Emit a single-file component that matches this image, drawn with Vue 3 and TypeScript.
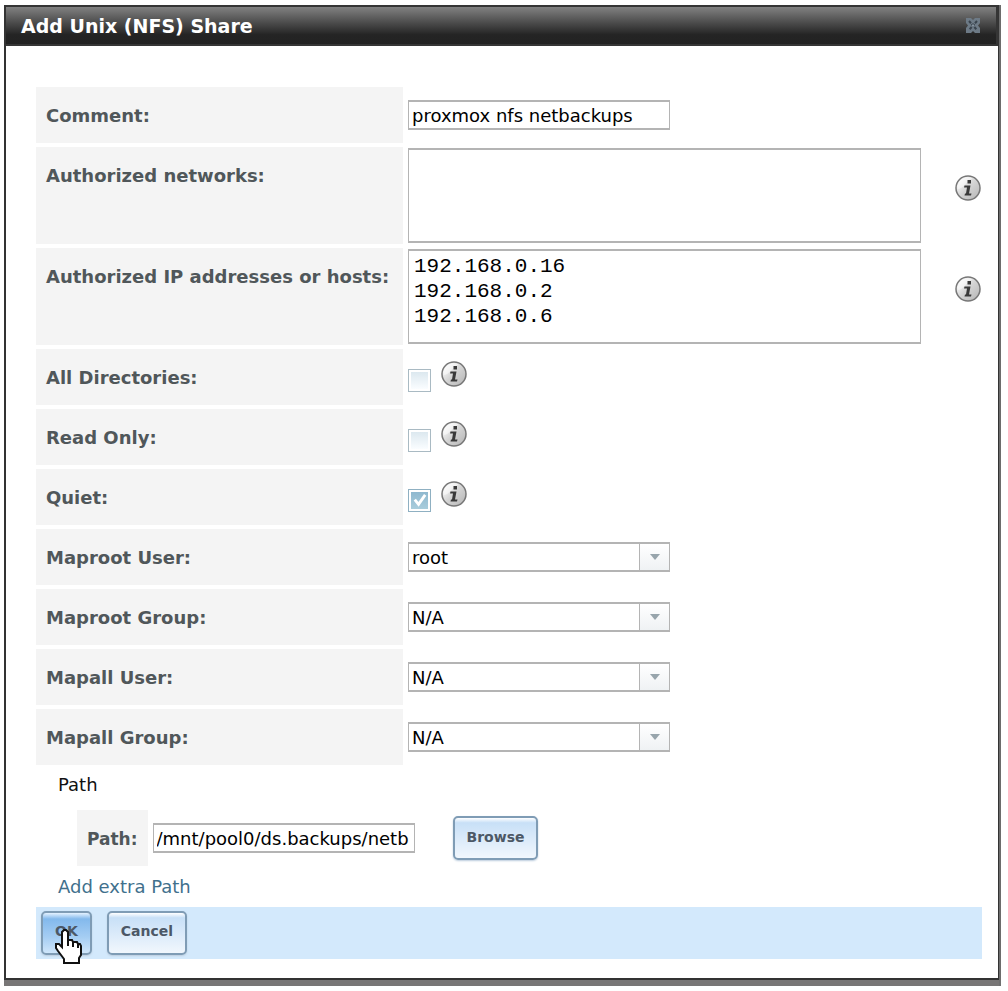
<script setup lang="ts">
import { reactive, ref } from 'vue'

interface Choice {
  id: string
  label: string
  value: string
  options: string[]
}

const comment = ref('proxmox nfs netbackups')
const areas = reactive([
  { id: 'networks', label: 'Authorized networks:', value: '' },
  { id: 'hosts', label: 'Authorized IP addresses or hosts:', value: '192.168.0.16\n192.168.0.2\n192.168.0.6' },
])
const flags = reactive([
  { id: 'alldirs', label: 'All Directories:', on: false },
  { id: 'readonly', label: 'Read Only:', on: false },
  { id: 'quiet', label: 'Quiet:', on: true },
])
const choices = reactive<Choice[]>([
  { id: 'maproot-user', label: 'Maproot User:', value: 'root', options: ['root', 'N/A'] },
  { id: 'maproot-group', label: 'Maproot Group:', value: 'N/A', options: ['N/A'] },
  { id: 'mapall-user', label: 'Mapall User:', value: 'N/A', options: ['N/A'] },
  { id: 'mapall-group', label: 'Mapall Group:', value: 'N/A', options: ['N/A'] },
])
const path = ref('/mnt/pool0/ds.backups/netb')
</script>

<template>
  <main class="dialog">
    <header class="titlebar">
      <h1>Add Unix (NFS) Share</h1>
      <button class="close" type="button" aria-label="Close">
        <svg viewBox="0 0 16 15" width="16" height="15">
          <path d="M1 0h5l2 2 2-2h5v5l-2 2.500 2 2.500v5h-5l-2-2-2 2H1v-5l2-2.500L1 5z" fill="#6d7a86" />
          <path d="M4 3l8 9M12 3l-8 9" fill="none" stroke="#39434d" stroke-width="2" stroke-dasharray="3 1" />
          <path d="M7 6.500h2v2H7z" fill="#8593a0" />
        </svg>
      </button>
    </header>

    <form class="body" @submit.prevent>
      <svg class="defs" width="0" height="0" aria-hidden="true">
        <defs>
          <linearGradient id="disc" x1="0" y1="0" x2="1" y2="1">
            <stop offset="0.2" stop-color="#f4f4f4" />
            <stop offset="0.5" stop-color="#d4d4d4" />
            <stop offset="1" stop-color="#b4b4b4" />
          </linearGradient>
          <symbol id="info" viewBox="0 0 26 26">
            <circle cx="13" cy="13" r="12" fill="url(#disc)" stroke="#777" stroke-width="1.500" />
            <path d="M2.500 14a10.500 10.500 0 0 1 15-10.500C11 6 9 14 2.500 14z" fill="#fff" opacity="0.5" />
            <path d="M12.500 5h3.500v3.500h-3.500zM9.500 10.500h6L14 18.500h2.500l-.5 2h-6.500l.5-2h1l1-6H9z" fill="#3a3a3a" />
          </symbol>
        </defs>
      </svg>

      <div class="rows">
        <div class="row">
          <label class="name" for="comment">Comment:</label>
          <input id="comment" v-model="comment" class="field" type="text" />
        </div>
        <div v-for="a in areas" :key="a.id" class="row tall">
          <label class="name" :for="a.id">{{ a.label }}</label>
          <textarea :id="a.id" v-model="a.value" class="area" spellcheck="false"></textarea>
          <svg class="info side" role="img" aria-label="Help"><use href="#info" /></svg>
        </div>
        <div v-for="f in flags" :key="f.id" class="row flag">
          <label class="name" :for="f.id">{{ f.label }}</label>
          <span class="tick">
            <input :id="f.id" v-model="f.on" type="checkbox" />
            <svg v-if="f.on" class="mark" viewBox="0 0 18 18"><path d="M4 8l4 5 7-10" fill="none" stroke="#fff" stroke-width="3" /></svg>
          </span>
          <svg class="info" role="img" aria-label="Help"><use href="#info" /></svg>
        </div>
        <div v-for="c in choices" :key="c.id" class="row">
          <label class="name" :for="c.id">{{ c.label }}</label>
          <span class="choice">
            <select :id="c.id" v-model="c.value">
              <option v-for="o in c.options" :key="o">{{ o }}</option>
            </select>
            <span class="arrow"><svg viewBox="0 0 10 6" width="10" height="6"><path d="M0 0h10L5 6z" fill="#98a5ac" /></svg></span>
          </span>
        </div>
      </div>

      <section class="paths">
        <h2>Path</h2>
        <div class="path-row">
          <label class="name" for="path">Path:</label>
          <input id="path" v-model="path" class="field" type="text" />
          <button class="btn browse" type="button">Browse</button>
        </div>
        <a class="extra" href="#">Add extra Path</a>
      </section>

      <footer class="actions">
        <button class="btn ok" type="submit">OK</button>
        <button class="btn" type="button">Cancel</button>
        <svg class="hand" viewBox="0 0 28 36" width="28" height="36" aria-hidden="true">
          <path d="M8 18V3l2-2h2l2 2v8h4l1 2h4l1 2h2l1 2v9l-2 3v5H10v-4l-3-4-3-4-2-3v-4h3l3 3z" fill="#fff" stroke="#111" stroke-width="2" />
          <path d="M14 10v7M19 12v6M24 15v4" stroke="#111" stroke-width="2" />
        </svg>
      </footer>
    </form>
  </main>
</template>

<style>
body { margin: 0; background: #fff; }
</style>

<style scoped>
.dialog {
  margin: 5px 9px 11px 4px;
  border: 1px solid #333;
  border-width: 0 1px 2px 2px;
  box-shadow: 2px 0 0 #6c6c6c, 0 6px 0 #787676, 2px 6px 0 #707070;
  background: #fff;
  font-family: "DejaVu Sans", sans-serif;
  font-size: 18px;
  color: #111;
}
.dialog * { box-sizing: border-box; }
.titlebar {
  display: flex;
  align-items: center;
  justify-content: space-between;
  height: 41px;
  padding: 0 15px;
  border: 2px solid #353535;
  border-left: 0;
  background: linear-gradient(#818181, #555 35%, #242424 75%, #222);
}
h1 { margin: 0; font-size: 19px; color: #fff; }
.close { display: flex; padding: 0; border: 0; background: none; }
.body { padding: 41px 16px 19px 30px; }
.defs { display: block; }
.rows { display: grid; gap: 4px; }
.row {
  display: grid;
  grid-template-columns: 367px minmax(0, 513px) auto;
  column-gap: 5px;
  align-items: center;
  min-height: 56px;
}
.name {
  align-self: stretch;
  padding: 17px 10px 15px;
  background: #f4f4f4;
  font-size: 18px;
  line-height: 24px;
  font-weight: bold;
  color: #50575a;
  white-space: nowrap;
}
.field, .area, select {
  margin: 0;
  border: 1px solid #b4b4b4;
  border-width: 2px 1px;
  border-radius: 0;
  background: #fff;
  color: #000;
  outline: 0;
}
.field, select {
  width: 262px;
  height: 30px;
  padding: 0 3px;
  font: 18px "DejaVu Sans", sans-serif;
}
.area {
  display: block;
  width: 100%;
  height: 95px;
  padding: 3px 5px;
  resize: none;
  overflow: hidden;
  font: 21px/25px "Liberation Mono", monospace;
}
.tall { min-height: 97px; }
.info { width: 26px; height: 26px; }
.side { justify-self: end; margin: 0 1px 16px 0; }
.row.tall { grid-template-columns: 367px minmax(0, 513px) minmax(26px, 1fr); }
.row.flag { grid-template-columns: 367px 23px 26px; column-gap: 5px; }
.flag .info { margin: 0 0 6px 5px; }
.tick { position: relative; display: block; margin-top: 6px; height: 23px; }
.tick input {
  appearance: none;
  display: block;
  width: 23px;
  height: 23px;
  margin: 0;
  padding: 2px;
  border: 1px solid #a9bac3;
  background: linear-gradient(#dce8ef, #fafdff) content-box;
}
.tick input:checked { border-color: #8fb0c2; background: linear-gradient(#8fb8cf, #a9cddc) content-box; }
.mark { position: absolute; left: 3px; top: 3px; width: 17px; height: 17px; pointer-events: none; }
.choice { position: relative; display: block; width: 262px; }
select { appearance: none; display: block; }
.arrow {
  position: absolute;
  top: 2px;
  right: 1px;
  bottom: 2px;
  width: 30px;
  display: flex;
  align-items: center;
  justify-content: center;
  border-left: 1px solid #b4b4b4;
  background: linear-gradient(#fff, #eff2f4);
  pointer-events: none;
}
.paths { padding: 8px 0 8px 22px; }
h2 { margin: 0; font-size: 18px; line-height: 24px; font-weight: normal; }
.path-row { display: flex; align-items: center; gap: 5px; margin: 13px 0 9px 19px; }
.path-row .name { font-size: 17px; }
.btn {
  height: 44px;
  padding: 0 12px 3px;
  border: 2px solid #7f9cb5;
  border-radius: 5px;
  background: linear-gradient(#fff, #c8e0f7 12%, #dcebfa 55%, #f1f7fd);
  box-shadow: 0 1px 2px #bcd;
  font: bold 14px "DejaVu Sans", sans-serif;
  color: #4c5866;
}
.browse { margin-left: 33px; }
.extra { color: #41708c; text-decoration: none; line-height: 24px; }
.actions {
  position: relative;
  display: flex;
  align-items: center;
  gap: 15px;
  height: 52px;
  padding: 0 5px 1px;
  background: #d3e9fc;
}
.ok { background: linear-gradient(#e4f2ff, #83b9ec 15%, #a5cdf3 60%, #cfe6fb); }
.hand { position: absolute; left: 18px; top: 22px; }
</style>
